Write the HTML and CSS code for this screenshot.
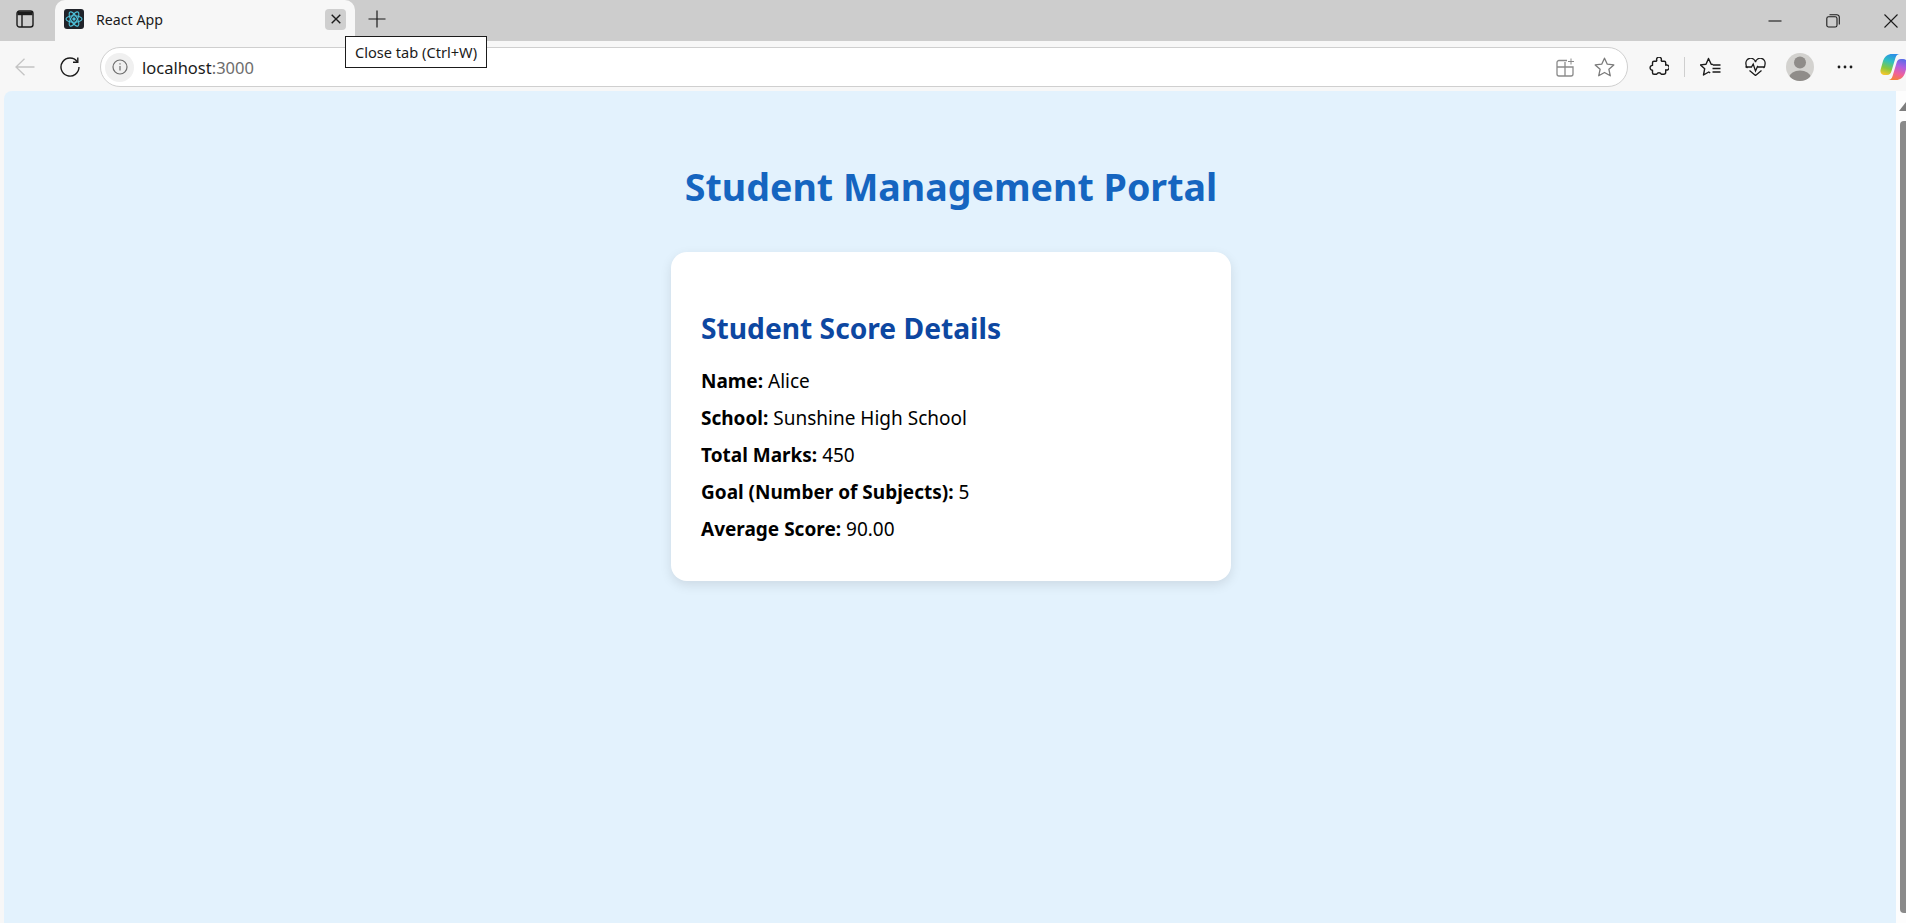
FILE: index.html
```html
<!DOCTYPE html>
<html lang="en">
<head>
    <meta charset="UTF-8">
    <meta name="viewport" content="width=device-width, initial-scale=1.0">
    <title>React App</title>
    <link rel="stylesheet" href="styles.css">
</head>
<body>
    <div class="tabstrip">
        <div class="tab-side">
            <svg width="18" height="18" viewBox="0 0 18 18" fill="none" stroke="#1b1b1b" stroke-width="1.4">
                <rect x="1" y="1" width="16" height="16" rx="2.5"/>
                <path d="M1.500 3.400h15" stroke-width="3.600"/>
                <path d="M6 5v12"/>
            </svg>
        </div>
        <div class="tab">
            <span class="favicon">
                <svg width="20" height="20" viewBox="0 0 20 20" fill="none" stroke="#4fc3dc" stroke-width="1.1">
                    <circle cx="10" cy="10" r="1.700" fill="#4fc3dc" stroke="none"/>
                    <ellipse cx="10" cy="10" rx="8" ry="3.200"/>
                    <ellipse cx="10" cy="10" rx="8" ry="3.200" transform="rotate(60 10 10)"/>
                    <ellipse cx="10" cy="10" rx="8" ry="3.200" transform="rotate(120 10 10)"/>
                </svg>
            </span>
            <span class="tab-title">React App</span>
            <span class="tab-close">
                <svg width="10" height="10" viewBox="0 0 10 10" stroke="#1b1b1b" stroke-width="1.400"><path d="M.7.700l8.600 8.600M9.300.700L.7 9.300"/></svg>
            </span>
        </div>
        <div class="new-tab">
            <svg width="18" height="18" viewBox="0 0 18 18" stroke="#1b1b1b" stroke-width="1.200"><path d="M9 .5v17M.5 9h17"/></svg>
        </div>
        <div class="window-btns">
            <svg width="14" height="14" viewBox="0 0 14 14" stroke="#1b1b1b" stroke-width="1.100"><path d="M.5 7h13"/></svg>
            <svg width="14" height="14" viewBox="0 0 14 14" fill="none" stroke="#1b1b1b" stroke-width="1.100"><rect x=".8" y="2.800" width="10.200" height="10.200" rx="1.800"/><path d="M3.500.7h7.300a2.500 2.500 0 0 1 2.500 2.500v7.300"/></svg>
            <svg width="14" height="14" viewBox="0 0 14 14" stroke="#1b1b1b" stroke-width="1.100"><path d="M.5.500l13 13M13.500.500l-13 13"/></svg>
        </div>
    </div>

    <div class="toolbar">
        <svg class="back" width="20" height="18" viewBox="0 0 20 18" fill="none" stroke="#c4c4c4" stroke-width="1.300"><path d="M19.500 9H1M9.500.7L1 9l8.500 8.300"/></svg>
        <svg class="reload" width="20" height="20" viewBox="0 0 20 20" fill="none" stroke="#1b1b1b" stroke-width="1.400"><path d="M17.300 4.800A9 9 0 1 0 19 10"/><path d="M17.800 .5v4.800H13"/></svg>
        <div class="address">
            <span class="site-info">
                <svg width="16" height="16" viewBox="0 0 16 16" fill="none" stroke="#6e6e6e" stroke-width="1.200"><circle cx="8" cy="8" r="7"/><path d="M8 7v4.500M8 4.200v1.300"/></svg>
            </span>
            <span class="url">localhost<span class="port">:3000</span></span>
            <svg class="addr-icon" width="19" height="19" viewBox="0 0 19 19" fill="none" stroke="#8a8a8a" stroke-width="1.300"><path d="M11 2.500H3a2 2 0 0 0-2 2V16a2 2 0 0 0 2 2h12a2 2 0 0 0 2-2V9H1M9 4v14"/><path d="M15 .5v6M12 3.500h6" stroke-width="1"/></svg>
            <svg class="addr-icon" width="21" height="20" viewBox="0 0 21 20" fill="none" stroke="#7a7a7a" stroke-width="1.300"><path d="M10.500 1.200l2.800 6 6.500.7-4.900 4.400 1.400 6.500-5.800-3.300-5.800 3.300 1.400-6.500L1.200 7.900l6.500-.7z" stroke-linejoin="round"/></svg>
        </div>
        <div class="tool-icons">
            <svg class="puzzle" width="20" height="20" viewBox="0 0 20 20" fill="none" stroke="#1b1b1b" stroke-width="1.400"><path d="M7.800 3.500a2.400 2.400 0 1 1 4.400 0l.4.800h2.600a1.500 1.500 0 0 1 1.500 1.500v2.400a2.500 2.500 0 1 1 0 4.600v2.400a2 2 0 0 1-2 2h-2.400a2.500 2.500 0 0 0-4.600 0H5a1.500 1.500 0 0 1-1.500-1.500v-2.500a2.400 2.400 0 1 1 0-4.800V5.800A1.500 1.500 0 0 1 5 4.300h2.400z" stroke-linejoin="round"/></svg>
            <span class="divider"></span>
            <svg class="favs" width="21" height="20" viewBox="0 0 21 20" fill="none" stroke="#1b1b1b" stroke-width="1.400"><path d="M13 7.500l-1.800-.3L8.500 1.500 6 7.200l-5.500.7 4.200 3.800L3.500 18l5.200-3 1.500.9" stroke-linejoin="round"/><path d="M13 8h7.500M12.500 11.500h8M12.500 15h8"/></svg>
            <svg class="health" width="21" height="18" viewBox="0 0 21 18" fill="none" stroke="#1b1b1b" stroke-width="1.300"><path d="M2.500 10A5 5 0 0 1 1 6.200 4.800 4.800 0 0 1 10.500 4 4.800 4.800 0 0 1 20 6.200 5 5 0 0 1 18.500 10M4.500 12.500l6 5 6-5"/><path d="M.5 9h6l1.700-3 2.300 7 2-4.500.8.500h6.200"/></svg>
            <span class="avatar">
                <svg width="28" height="28" viewBox="0 0 28 28"><circle cx="14" cy="9.500" r="6" fill="#8f8c89"/><ellipse cx="14" cy="24" rx="10.500" ry="6.500" fill="#8f8c89"/></svg>
            </span>
            <svg class="more" width="16" height="4" viewBox="0 0 16 4" fill="#1b1b1b"><circle cx="2" cy="2" r="1.400"/><circle cx="8" cy="2" r="1.400"/><circle cx="14" cy="2" r="1.400"/></svg>
            <svg class="copilot" width="28" height="28" viewBox="0 0 28 28">
                <defs>
                    <linearGradient id="copLeft" x1="0.6" y1="0" x2="0.3" y2="1"><stop offset="0" stop-color="#2a8fe8"/><stop offset=".35" stop-color="#2fc0c0"/><stop offset=".7" stop-color="#86c83e"/><stop offset="1" stop-color="#f4c62c"/></linearGradient>
                    <linearGradient id="copRight" x1="0.7" y1="0" x2="0.4" y2="1"><stop offset="0" stop-color="#5a6ce8"/><stop offset=".35" stop-color="#b060e0"/><stop offset=".7" stop-color="#f0609a"/><stop offset="1" stop-color="#f4803c"/></linearGradient>
                </defs>
                <path d="M12 1H20C17.500 1 16.200 2.600 15.400 5L11.500 18C10.800 20.500 9.500 22 7 22H5C2 22 0 20 .5 17L3 8C4.500 3.500 8 1 12 1Z" fill="url(#copLeft)"/>
                <path d="M16 27H8C10.500 27 11.800 25.400 12.600 23L16.500 10C17.200 7.500 18.500 6 21 6H23C26 6 28 8 27.500 11L25 20C23.500 24.500 20 27 16 27Z" fill="url(#copRight)"/>
            </svg>
        </div>
    </div>

    <div class="viewport">
        <main class="app">
            <h1>Student Management Portal</h1>
            <div class="card">
                <h2>Student Score Details</h2>
                <p><strong>Name:</strong> Alice</p>
                <p><strong>School:</strong> Sunshine High School</p>
                <p><strong>Total Marks:</strong> 450</p>
                <p><strong>Goal (Number of Subjects):</strong> 5</p>
                <p><strong>Average Score:</strong> 90.00</p>
            </div>
        </main>
        <div class="scrollbar">
            <span class="scroll-up"></span>
            <span class="scroll-thumb"></span>
        </div>
    </div>

    <div class="tooltip">Close tab (Ctrl+W)</div>
</body>
</html>
```

FILE: styles.css
```css
html,
body {
    height: 100%;
}

body {
    margin: 0;
    overflow: hidden;
    display: flex;
    flex-direction: column;
    background-color: #f7f7f7;
    font-family: "Noto Sans", "Open Sans", sans-serif;
    color: #000000;
}

/* browser chrome */
.tabstrip {
    height: 41px;
    flex: none;
    display: flex;
    background-color: #cdcdcd;
}

.tab-side {
    width: 55px;
    display: flex;
    align-items: center;
    justify-content: center;
    padding: 0 5px 3px 0;
    box-sizing: border-box;
}

.tab {
    width: 300px;
    display: flex;
    align-items: center;
    padding: 0 9px 3px 9px;
    box-sizing: border-box;
    background-color: #f7f7f7;
    border-radius: 10px 10px 0 0;
}

.favicon {
    width: 20px;
    height: 20px;
    background-color: #20232a;
    border-radius: 3px;
    display: flex;
}

.tab-title {
    flex: 1;
    margin-left: 12px;
    font-size: 14.2px;
    color: #1b1b1b;
}

.tab-close {
    width: 21px;
    height: 21px;
    background-color: #cfcfcf;
    border-radius: 4px;
    display: flex;
    align-items: center;
    justify-content: center;
}

.new-tab {
    width: 44px;
    display: flex;
    align-items: center;
    justify-content: center;
    padding-bottom: 4px;
    box-sizing: border-box;
}

.window-btns {
    margin-left: auto;
    display: flex;
    align-items: center;
    gap: 44px;
    padding-right: 8px;
}

.toolbar {
    height: 50px;
    flex: none;
    display: flex;
    align-items: center;
    padding: 2px 0 0 15px;
    box-sizing: border-box;
}

.back {
    flex: none;
}

.reload {
    flex: none;
    margin-left: 25px;
}

.address {
    flex: none;
    width: 1528px;
    height: 40px;
    margin-left: 20px;
    display: flex;
    align-items: center;
    box-sizing: border-box;
    padding: 0 12px 0 4px;
    background-color: #ffffff;
    border: 1px solid #cfcfcf;
    border-radius: 20px;
}

.site-info {
    width: 29px;
    height: 29px;
    background-color: #f0f0f0;
    border-radius: 50%;
    display: flex;
    align-items: center;
    justify-content: center;
}

.url {
    flex: 1;
    margin-left: 8px;
    font-size: 16.500px;
    color: #1b1b1b;
}

.port {
    color: #6d6d6d;
}

.addr-icon {
    margin-left: 19px;
}

.tool-icons {
    display: flex;
    align-items: center;
    flex: none;
}

.puzzle {
    margin-left: 21px;
}

.divider {
    width: 1px;
    height: 20px;
    margin-left: 15px;
    background-color: #cfcfcf;
}

.favs {
    margin-left: 15px;
}

.health {
    margin-left: 24px;
}

.avatar {
    width: 28px;
    height: 28px;
    margin-left: 20px;
    background-color: #d3d2cf;
    border-radius: 50%;
    overflow: hidden;
    display: flex;
}

.more {
    margin-left: 23px;
}

.copilot {
    flex: none;
    margin-left: 27px;
}

.tooltip {
    position: absolute;
    left: 345px;
    top: 36px;
    padding: 0 9px;
    height: 32px;
    line-height: 30px;
    box-sizing: border-box;
    background-color: #ffffff;
    border: 1px solid #1b1b1b;
    font-size: 14.600px;
    color: #1b1b1b;
}

/* page */
.viewport {
    flex: 1;
    min-height: 0;
    display: flex;
    padding-left: 4px;
}

.app {
    flex: 1;
    background-color: #e3f2fd;
    border-radius: 8px 0 0 0;
    text-align: center;
    padding: 69px 0 0 2px;
}

h1 {
    margin: 0;
    font-size: 37.600px;
    line-height: 54px;
    font-weight: 700;
    color: #1565c0;
}

.card {
    width: 560px;
    height: 329px;
    margin: 38px auto 0;
    padding: 57px 30px 0;
    box-sizing: border-box;
    text-align: left;
    background-color: #ffffff;
    border-radius: 16px;
    box-shadow: 0 4px 12px rgba(0, 0, 0, 0.1);
}

h2 {
    margin: 0 0 16px;
    font-size: 28.200px;
    line-height: 38px;
    font-weight: 700;
    color: #0d47a1;
}

.card p {
    margin: 0;
    font-size: 19px;
    line-height: 37px;
}

.scrollbar {
    width: 10px;
    flex: none;
    position: relative;
    overflow: hidden;
    padding-bottom: 10px;
    box-sizing: border-box;
    display: flex;
    flex-direction: column;
    background-color: #fdfdfd;
}

.scroll-up {
    width: 0;
    height: 0;
    margin: 11px 0 0 3px;
    border-left: 7px solid transparent;
    border-right: 7px solid transparent;
    border-bottom: 9px solid #7d7d7d;
    flex: none;
}

.scroll-thumb {
    flex: 1;
    width: 14px;
    margin: 10px 0 0 4px;
    background-color: #8a8a8a;
    border-radius: 4px;
}
```
